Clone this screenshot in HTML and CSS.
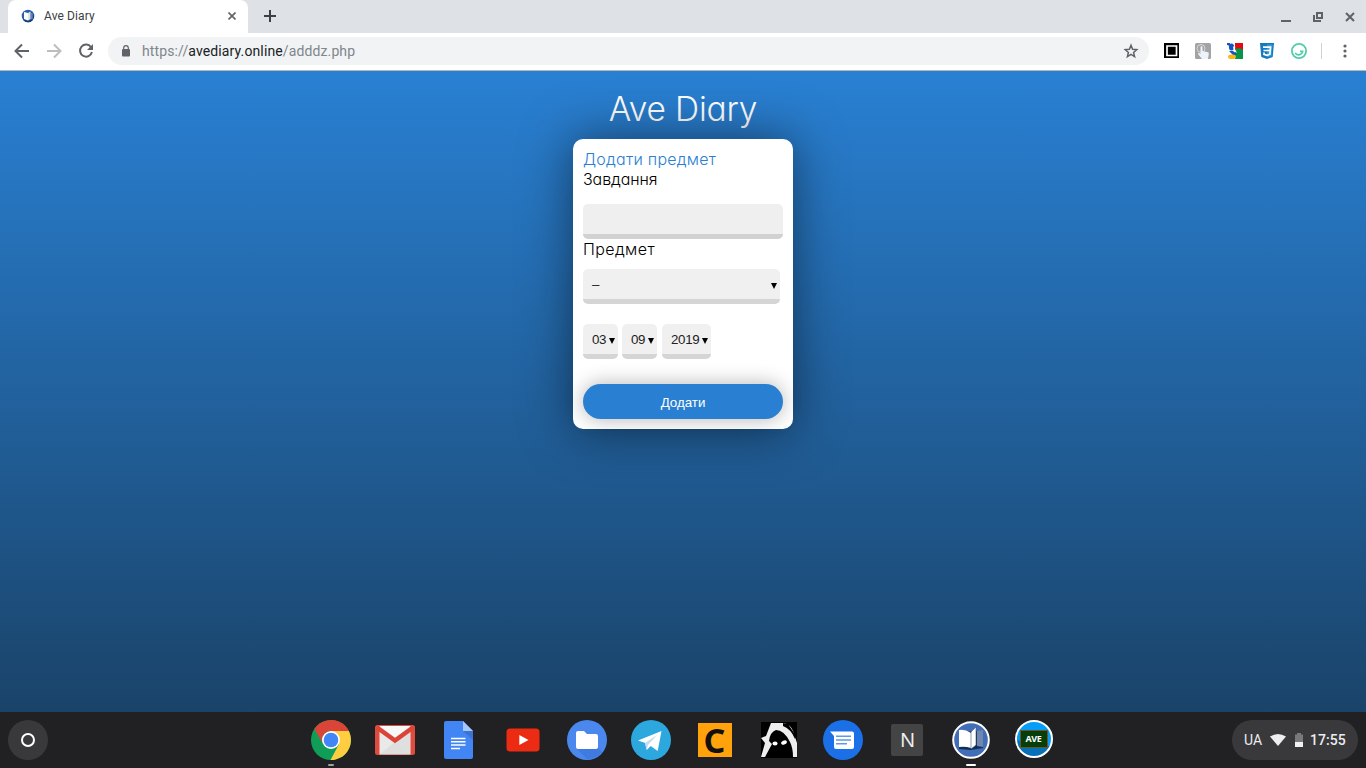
FILE: index.html
```html
<!DOCTYPE html>
<html lang="uk">
<head>
<meta charset="utf-8">
<title>Ave Diary</title>
<link rel="stylesheet" href="styles.css">
</head>
<body>
<header class="browser">
  <div class="tabstrip">
    <div class="tab">
      <svg class="favicon" width="16" height="16" viewBox="0 0 16 16"><circle cx="8" cy="8" r="6.300" fill="#285fa8"/><path d="M3 11q2 4 7 3 3-1 4-5l-1-3v5l-5 2z" fill="#173d70"/><path d="M4 4L8 5V12.500L4 11Z" fill="#fff"/><path d="M8 5L10.500 3.500V11L8 12.500Z" fill="#dce4ed"/><path d="M11 5H12.500V11H11Z" fill="#70859d"/></svg>
      <span class="tab-title">Ave Diary</span>
      <svg class="tab-close" width="8" height="8" viewBox="0 0 8 8"><path d="M.5.5l7 7M7.500.5l-7 7" stroke="#5f6368" stroke-width="1.600"/></svg>
    </div>
    <svg class="new-tab" width="12" height="12" viewBox="0 0 12 12"><path d="M6 0v12M0 6h12" stroke="#3c4043" stroke-width="2"/></svg>
    <svg class="window-buttons" width="74" height="12" viewBox="0 0 74 12" fill="none" stroke="#5f6368" stroke-width="2"><path d="M0 10h10"/><path d="M36 2h5v5h-5z"/><path d="M33 4v6h7"/><path d="M65 2l8 8M73 2l-8 8"/></svg>
  </div>
  <div class="toolbar">
    <div class="nav">
      <svg width="16" height="16" viewBox="0 0 16 16" fill="none" stroke="#5f6368" stroke-width="2"><path d="M15 8H2M8 1.500L1.500 8 8 14.500"/></svg>
      <svg width="16" height="16" viewBox="0 0 16 16" fill="none" stroke="#bbbdbf" stroke-width="2"><path d="M1 8h13M8 1.500L14.500 8 8 14.500"/></svg>
      <svg width="16" height="16" viewBox="0 0 16 16" fill="none" stroke="#5f6368" stroke-width="2"><path d="M13 4.200A6 6 0 1 0 13.900 9"/><path d="M15 1v6H9z" fill="#5f6368" stroke="none"/></svg>
    </div>
    <div class="omnibox">
      <svg class="lock" width="8" height="12" viewBox="0 0 8 12"><path d="M1.700 5V3a2.300 2.300 0 0 1 4.600 0v2" fill="none" stroke="#5f6368" stroke-width="1.200"/><rect y="4" width="8" height="7.500" rx="1" fill="#5f6368"/></svg>
      <span class="url">https://<b>avediary.online</b>/adddz.php</span>
      <svg class="star" width="16" height="16" viewBox="0 0 16 16"><path d="M8 2.300l1.600 3.900 4.200.4-3.200 2.800 1 4.200L8 11.400l-3.600 2.200 1-4.200-3.200-2.800 4.200-.4z" fill="none" stroke="#5f6368" stroke-width="1.500"/></svg>
    </div>
    <div class="extensions">
      <svg width="16" height="16" viewBox="0 0 16 16"><path d="M1 0h15v15H1z" fill="#000"/><path d="M4 3h9.500v9.500H4z" fill="none" stroke="#fff" stroke-width="1.700"/></svg>
      <svg width="16" height="16" viewBox="0 0 16 16"><rect width="16" height="16" rx="1.500" fill="#a3a3a3"/><circle cx="6" cy="5.500" r="4" fill="none" stroke="#d8d8d8"/><path d="M5.500 4.500q0-1.500 1-1.500t1 1.500V8l5.500 1.200q1 .3.800 1.800L13 16H7l-4-5q0-1 1-1l1.500 1z" fill="#edf3fb"/></svg>
      <svg width="16" height="16" viewBox="0 0 16 16"><path d="M0 0h8v16H0z" fill="#fff"/><path d="M8 0h8v7H8z" fill="#e20b12"/><path d="M8 6l5-1 3 2v9H8z" fill="#079447"/><path d="M0 0h3v3L0 2zM2 8l4 0 4 3-3 2z" fill="#1455c0"/><ellipse cx="4.500" cy="4" rx="2.600" ry="3.500" fill="#1455c0"/><path d="M6 4q3-3 2 2l2 4-3-2z" fill="#fff"/><ellipse cx="5" cy="13.700" rx="4" ry="2.300" fill="#f9b814"/></svg>
      <svg width="16" height="16" viewBox="0 0 16 16"><path d="M1 0h14l-1.300 14L8 16l-5.700-2z" fill="#1678bd"/><path d="M8 1.500h5.500L12.500 13 8 14.500z" fill="#2e9de0"/><path d="M4 4.200h7.500l-.6 7L8 12.300l-3-1V9.500M4.500 7.500h6.300" fill="none" stroke="#fff" stroke-width="1.700"/></svg>
      <svg width="16" height="16" viewBox="0 0 16 16" fill="none" stroke="#50cdaa"><circle cx="8" cy="8" r="7.100" stroke-width="1.800"/><path d="M4.200 10q2.300 3 5.500 1.300 2-1 2-3H9" stroke-width="1.700"/></svg>
    </div>
    <div class="separator"></div>
    <svg class="menu" width="4" height="14" viewBox="0 0 4 14" fill="#5f6368"><circle cx="2" cy="2" r="1.600"/><circle cx="2" cy="7" r="1.600"/><circle cx="2" cy="12" r="1.600"/></svg>
  </div>
</header>

<main class="page">
  <h1 class="brand">Ave Diary</h1>
  <form class="card">
    <div class="geo link">Додати предмет</div>
    <div class="geo task-label">Завдання</div>
    <input class="task" type="text" aria-label="Завдання">
    <div class="geo subject-label">Предмет</div>
    <div class="field subject"><span>–</span><svg class="arrow" width="6" height="6" viewBox="0 0 6 6"><path d="M0 0h6L3 6z"/></svg></div>
    <div class="dates">
      <div class="field day"><span>03</span><svg class="arrow" width="6" height="6" viewBox="0 0 6 6"><path d="M0 0h6L3 6z"/></svg></div>
      <div class="field month"><span>09</span><svg class="arrow" width="6" height="6" viewBox="0 0 6 6"><path d="M0 0h6L3 6z"/></svg></div>
      <div class="field year"><span>2019</span><svg class="arrow" width="6" height="6" viewBox="0 0 6 6"><path d="M0 0h6L3 6z"/></svg></div>
    </div>
    <button class="submit" type="button">Додати</button>
  </form>
</main>

<footer class="shelf">
  <div class="launcher"><span class="ring"></span></div>
  <div class="apps">
    <div class="app running"><svg width="40" height="40" viewBox="0 0 40 40"><circle cx="20" cy="20" r="20" fill="#0f9d58"/><path d="M20 20V11h17.800A20 20 0 0 1 19.500 40l8.300-15.500z" fill="#ffcd40"/><path d="M3.400 9A20 20 0 0 1 37.900 11H20a9 9 0 0 0-7.800 13.500z" fill="#db4437"/><circle cx="20" cy="20" r="9" fill="#fff"/><circle cx="20" cy="20" r="7.300" fill="#4285f4"/></svg></div>
    <div class="app"><svg width="40" height="40" viewBox="0 0 40 40"><rect y="5" width="40" height="30" rx="2.500" fill="#df4b3f"/><path d="M4.500 6h31v28.500h-31z" fill="#e9e9e9"/><path d="M5 34l15-12 15 12z" fill="#dedede"/><path d="M5 6h30L20 18z" fill="#f8f8f8"/><path d="M20 22L35 12v22z" fill="#dfdfdf"/><path d="M2 7.500L20 20.500 38 7.500" fill="none" stroke="#db4437" stroke-width="4.500"/></svg></div>
    <div class="app"><svg width="40" height="40" viewBox="0 0 40 40"><path d="M7 1h17l10 10v26a2 2 0 0 1-2 2H7a2 2 0 0 1-2-2V3a2 2 0 0 1 2-2z" fill="#4285f4"/><path d="M24 1l10 10H24z" fill="#a9c8fa"/><path d="M24 11h10v9z" fill="#3b73d5"/><path d="M12 18.500h14.500M12 21.800h14.500M12 25.100h14.500M12 28.400h9" stroke="#fff" stroke-width="1.500"/></svg></div>
    <div class="app"><svg width="40" height="40" viewBox="0 0 40 40"><rect x="3.500" y="8.500" width="33" height="23" rx="3.500" fill="#eb2c12"/><path d="M16.300 15L25.500 20l-9.200 5z" fill="#fff"/></svg></div>
    <div class="app"><svg width="40" height="40" viewBox="0 0 40 40"><circle cx="20" cy="20" r="20" fill="#4a88ee"/><path d="M9 28l11 11q10 0 15-7l-4-4z" fill="#3f7ae0"/><path d="M9 13q0-2 2-2h6l3 3h9q2 0 2 2v11q0 2-2 2H11q-2 0-2-2z" fill="#fff"/></svg></div>
    <div class="app"><svg width="40" height="40" viewBox="0 0 40 40"><circle cx="20" cy="20" r="20" fill="#2ca8df"/><path d="M7 20.500L30.500 11l-3.800 20-7-5-4 4-1.500-7z" fill="#fff"/><path d="M14 23l12-8-9 10-1.300 5z" fill="#c4dceb"/></svg></div>
    <div class="app"><div class="c-logo">C</div></div>
    <div class="app"><svg width="36" height="36" viewBox="0 0 36 36"><path d="M0 0h36v36H0z"/><path d="M10 1h13q7 2 9 8l4 12v14h-4q0-9-3-15Q23 8 15 8 9 10 8 19l3 3-7 13H0l4-14-4-5 5-2z" fill="#eee"/><path d="M22 1l5 1 8 12-1 3q-4-10-12-13" fill="#000"/><ellipse cx="14" cy="21.500" rx="2.500" ry="2" fill="#fff"/><ellipse cx="23" cy="20.500" rx="3" ry="2" transform="rotate(-25 23 20.500)" fill="#fff"/></svg></div>
    <div class="app"><svg width="40" height="40" viewBox="0 0 40 40"><circle cx="20" cy="20" r="20" fill="#1b70e7"/><path d="M7 11.500h22q2 0 2 2V27q0 2-2 2H13q-2 0-2-2V16z" fill="#fff"/><path d="M13 16.200h15M13 20h15M13 23.800h11" stroke="#6297e9" stroke-width="1.500"/></svg></div>
    <div class="app"><div class="n-logo">N</div></div>
    <div class="app active"><svg width="40" height="40" viewBox="0 0 40 40"><circle cx="20" cy="20" r="17.800" fill="#426db7" stroke="#fff" stroke-width="2"/><path d="M8 12v17l12 1 12-2V11z" fill="#102f54"/><path d="M8 10q6-1 12 3v15q-6-2-12-1z" fill="#fff"/><path d="M20 12l5-5v18l-5 4z" fill="#fff" stroke="#405f80" stroke-width=".6"/><path d="M26 11l6-1v17l-6-1z" fill="#7187ae"/></svg></div>
    <div class="app"><div class="ave-logo"><span class="board">AVE</span></div></div>
  </div>
  <div class="tray">
    <span class="lang">UA</span>
    <svg class="wifi" width="16" height="12" viewBox="0 0 16 12"><path d="M0 2.500Q8-2.500 16 2.500L8 12z" fill="#eeeef0"/></svg>
    <svg class="battery" width="8" height="14" viewBox="0 0 8 14"><path d="M2 0h4v1.500h2V14H0V1.500h2z" fill="#79797b"/><path d="M0 9h8v5H0z" fill="#f1f1f3"/></svg>
    <span class="clock">17:55</span>
  </div>
</footer>
</body>
</html>
```
FILE: styles.css
```css
* { box-sizing: border-box; }
svg { display: block; flex: none; }
body { margin: 0; width: 1366px; height: 768px; overflow: hidden; display: flex; flex-direction: column; font-family: Roboto, sans-serif; }
.browser { height: 71px; flex: none; background: #fff; border-bottom: 1px solid #b5b7b9; }
.tabstrip { height: 33px; display: flex; align-items: center; background: #dee1e6; padding: 0 0 1px 8px; }
.tab { width: 240px; height: 33px; display: flex; align-items: center; background: #fff; border-radius: 8px 8px 0 0; padding: 0 12px 1px; margin-bottom: -1px; }
.tab-title { margin-left: 8px; color: #3c4043; font-size: 12px; line-height: 16px; letter-spacing: .1px; }
.tab-close { margin-left: auto; }
.new-tab { margin-left: 16px; }
.window-buttons { margin: 2px 11px 0 auto; }
.toolbar { height: 37px; display: flex; align-items: center; padding-bottom: 1px; }
.nav { display: flex; gap: 16px; padding-left: 14px; width: 108px; }
.omnibox { width: 1041px; height: 28px; display: flex; align-items: center; background: #f1f3f4; border-radius: 14px; padding: 0 10px 0 14px; }
.url { margin-left: 12px; font-size: 14px; line-height: 20px; color: #80868b; letter-spacing: .12px; }
.url b { font-weight: 400; color: #202124; }
.star { margin-left: auto; }
.extensions { display: flex; gap: 16px; margin-left: 14px; }
.separator { width: 1px; height: 16px; background: #cfd1d3; margin-left: 14px; }
.menu { margin-left: 21px; }
.page { height: 641px; flex: none; display: flex; flex-direction: column; align-items: center; background: linear-gradient(#2980d3, #1a4369); }
.brand { margin: 16px 0 0; height: 52px; font: 350 33.5px/44px Inter, "Open Sans", sans-serif; font-feature-settings: "cv11"; color: #fff; letter-spacing: -.2px; white-space: nowrap; }
.card { width: 220px; height: 290px; padding: 10px; background: #fff; border-radius: 10px; box-shadow: 0 0 50px rgba(0,0,0,.5); }
.geo { height: 20px; font: 350 16px/20px Inter, "Open Sans", sans-serif; font-feature-settings: "cv11"; color: #000; white-space: nowrap; }
.link { color: #2980d3; letter-spacing: .25px; }
.task-label { letter-spacing: -.1px; }
.task { display: block; width: 200px; height: 35px; margin: 15px 0 0; border: 0; border-bottom: 5px solid #d1d1d1; border-radius: 5px; background: #efefef; }
.subject-label { margin-bottom: 10px; letter-spacing: .4px; }
.field { height: 35px; display: flex; align-items: center; justify-content: space-between; padding: 1px 3px 0 9px; background: #f0f0f0; border-bottom: 5px solid #d5d5d5; border-radius: 5px; font: 13.333px/16px "Liberation Sans", sans-serif; color: #222; letter-spacing: -.3px; }
.subject { width: 197px; }
.subject span { margin-top: 1px; }
.arrow { margin-top: 3px; }
.dates { display: flex; margin-top: 20px; }
.day, .month { width: 35px; margin-right: 4px; }
.month { margin-right: 5px; }
.year { width: 49px; }
.submit { display: block; width: 200px; height: 35px; margin: 25px 0 0; padding: 2px 0 0; border: 0; border-radius: 18px; background: #2980d3; color: #fff; font: 13.333px/16px "Liberation Sans", sans-serif; box-shadow: 0 0 20px rgba(0,0,0,.3); }
.shelf { height: 56px; flex: none; display: flex; align-items: center; justify-content: space-between; background: #212123; padding: 0 8px; }
.launcher { width: 40px; height: 40px; display: grid; place-items: center; border-radius: 50%; background: #39393b; }
.ring { width: 14px; height: 14px; border: 2px solid #fff; border-radius: 50%; }
.apps { display: flex; gap: 24px; margin-left: 85px; }
.app { position: relative; width: 40px; height: 40px; display: grid; place-items: center; }
.running::after, .active::after { content: ""; position: absolute; bottom: -6px; left: 17px; width: 6px; height: 2px; border-radius: 1px; background: #a0a0a2; }
.active::after { left: 15px; width: 10px; background: #fff; }
.c-logo { width: 34px; height: 34px; background: #ffa20c; color: #111; text-align: center; font: 700 34px/34px "Noto Sans", sans-serif; }
.n-logo { width: 32px; height: 32px; border-radius: 2px; background: #444; color: #eee; text-align: center; font: 20px/32px "Noto Sans", sans-serif; padding-left: 2px; }
.ave-logo { width: 38px; height: 38px; margin: -2px 2px 0 0; display: grid; place-items: center; border: 2px solid #fff; border-radius: 50%; background: linear-gradient(190deg, #079cf5 60%, #0870b6 61%); }
.board { width: 28px; height: 18px; background: #063f0b; border: 1px solid #68552b; color: #fff; text-align: center; font: 700 9px/15px "Noto Sans", sans-serif; letter-spacing: -.3px; }
.tray { width: 126px; height: 40px; display: flex; align-items: center; padding: 0 12px; border-radius: 20px; background: #39393b; color: #ececef; white-space: nowrap; font-size: 14px; line-height: 20px; }
.wifi { margin-left: 8px; }
.battery { margin: 0 7px 0 9px; }
.clock { font-weight: 500; letter-spacing: 0; }
```
